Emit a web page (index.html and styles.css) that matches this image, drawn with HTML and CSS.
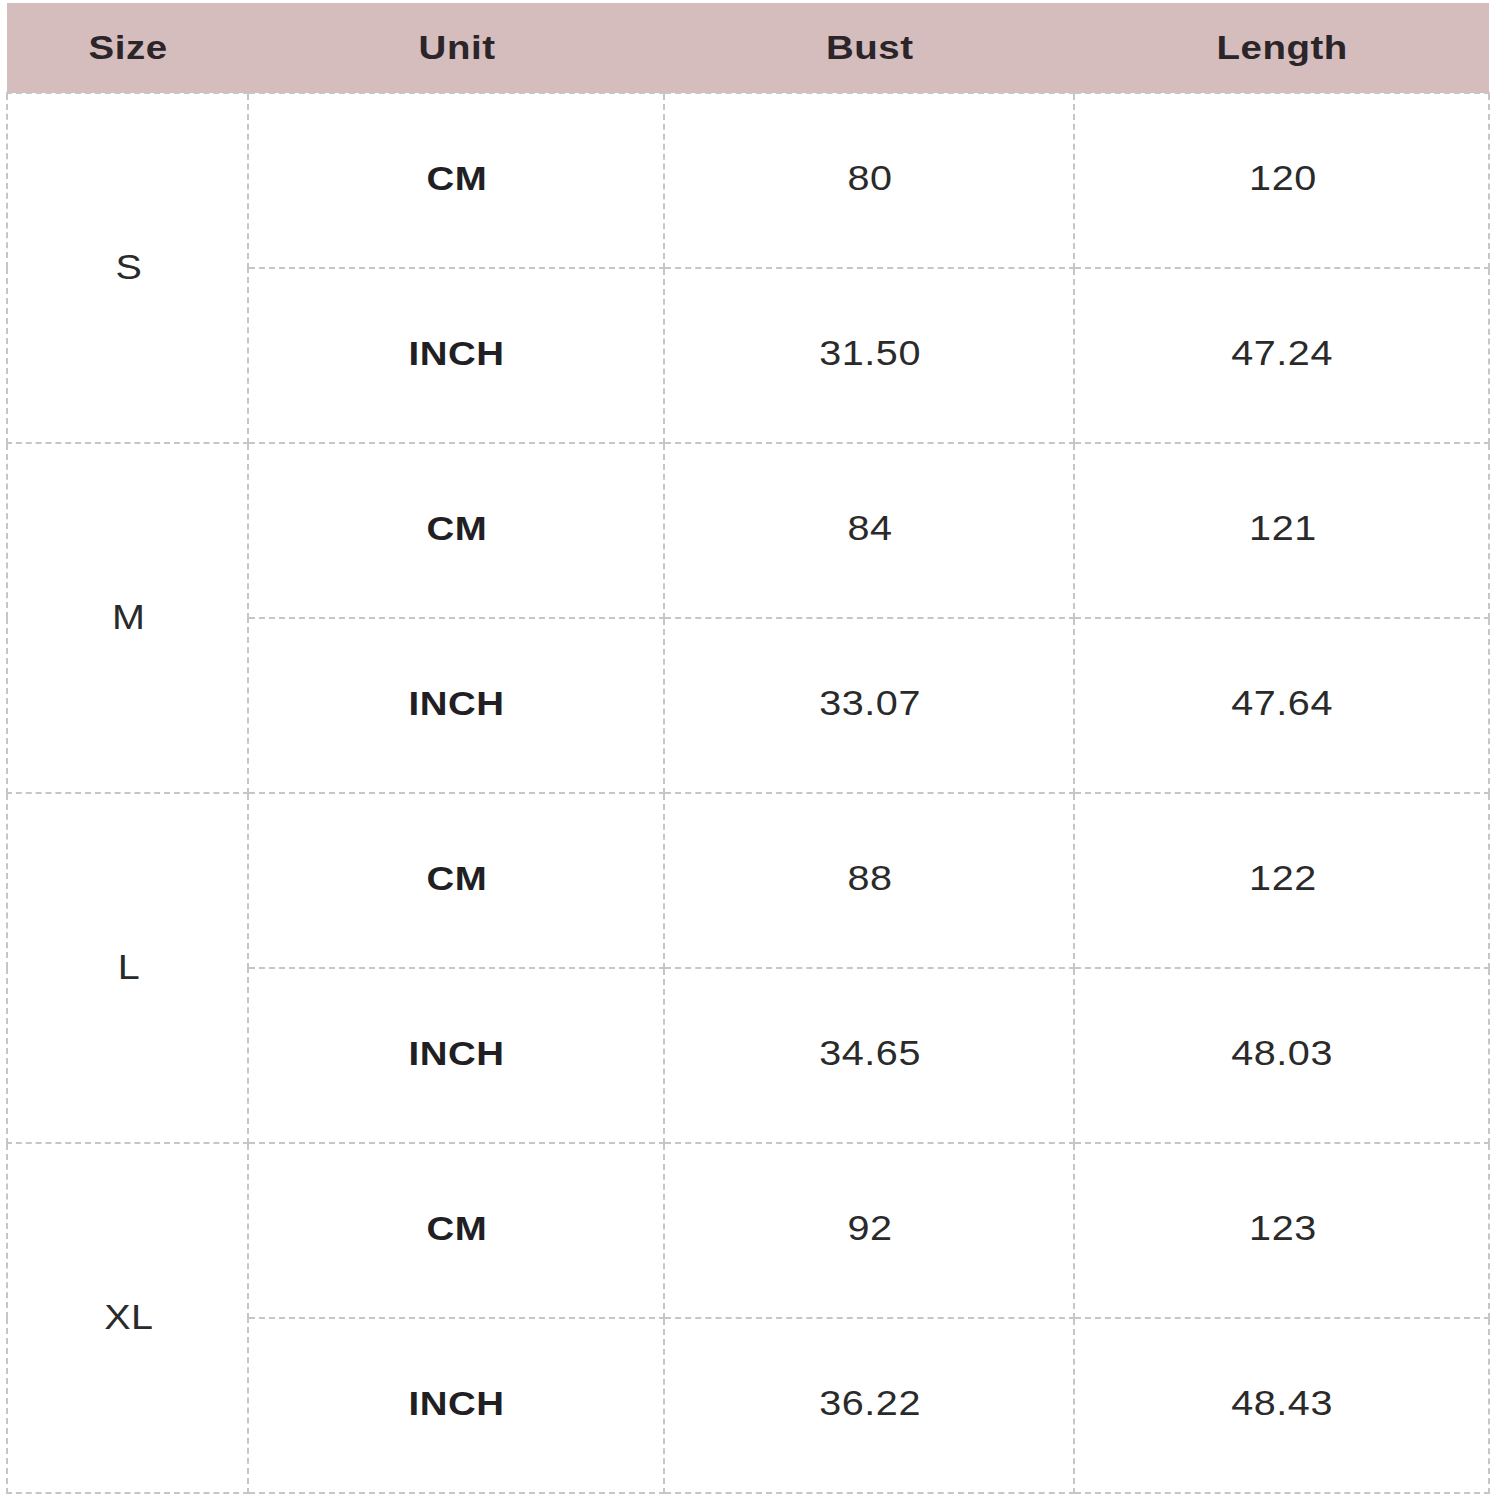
FILE: index.html
```html
<!DOCTYPE html>
<html lang="en">
<head>
<meta charset="utf-8">
<title>Size Chart</title>
<link rel="stylesheet" href="styles.css">
</head>
<body>
<table class="chart">
  <colgroup>
    <col class="c-size">
    <col class="c-unit">
    <col class="c-bust">
    <col class="c-length">
  </colgroup>
  <thead>
    <tr><th><span class="t">Size</span></th><th><span class="t">Unit</span></th><th><span class="t">Bust</span></th><th><span class="t">Length</span></th></tr>
  </thead>
  <tbody>
    <tr><td class="size" rowspan="2"><span class="t">S</span></td><td class="unit"><span class="t">CM</span></td><td><span class="t">80</span></td><td><span class="t">120</span></td></tr>
    <tr><td class="unit"><span class="t">INCH</span></td><td><span class="t">31.50</span></td><td><span class="t">47.24</span></td></tr>
    <tr><td class="size" rowspan="2"><span class="t">M</span></td><td class="unit"><span class="t">CM</span></td><td><span class="t">84</span></td><td><span class="t">121</span></td></tr>
    <tr><td class="unit"><span class="t">INCH</span></td><td><span class="t">33.07</span></td><td><span class="t">47.64</span></td></tr>
    <tr><td class="size" rowspan="2"><span class="t">L</span></td><td class="unit"><span class="t">CM</span></td><td><span class="t">88</span></td><td><span class="t">122</span></td></tr>
    <tr><td class="unit"><span class="t">INCH</span></td><td><span class="t">34.65</span></td><td><span class="t">48.03</span></td></tr>
    <tr><td class="size" rowspan="2"><span class="t">XL</span></td><td class="unit"><span class="t">CM</span></td><td><span class="t">92</span></td><td><span class="t">123</span></td></tr>
    <tr><td class="unit"><span class="t">INCH</span></td><td><span class="t">36.22</span></td><td><span class="t">48.43</span></td></tr>
  </tbody>
</table>
</body>
</html>
```

FILE: styles.css
```css
html, body {
  margin: 0;
  padding: 0;
  background: #ffffff;
}

body {
  font-family: "Liberation Sans", Arial, sans-serif;
  color: #2a2a2a;
}

.chart {
  border-collapse: collapse;
  table-layout: fixed;
  width: 1482px;
  margin: 3px 0 0 6px;
}

.c-size { width: 241px; }
.c-unit { width: 416px; }
.c-bust { width: 410px; }
.c-length { width: 415px; }

.t {
  display: inline-block;
  transform: scaleX(1.13);
  letter-spacing: 0.5px;
}

.chart th {
  background: #d5bdbd;
  height: 89px;
  padding: 0 0 0 2px;
  font-size: 34px;
  font-weight: bold;
  text-align: center;
  vertical-align: middle;
  color: #2b2429;
  border-bottom: 2px dashed #c6c6c6;
}

.chart td {
  height: 168px;
  padding: 0 0 5px 2px;
  text-align: center;
  vertical-align: middle;
  font-size: 35px;
  border: 2px dashed #c6c6c6;
}

.chart td.unit {
  font-size: 34px;
  font-weight: bold;
  color: #221f24;
}

.chart td.size {
  padding-bottom: 2px;
}
```
